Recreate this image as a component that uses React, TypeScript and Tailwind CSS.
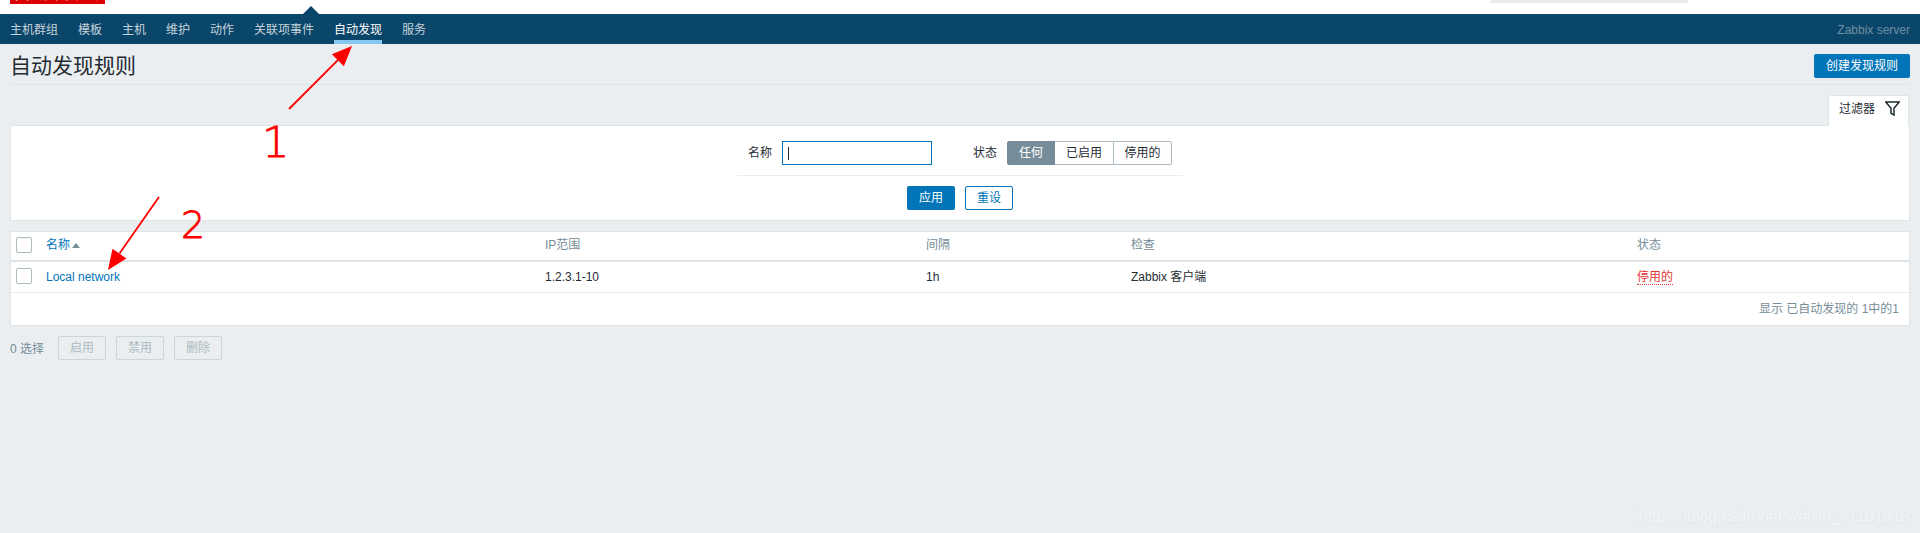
const font = "font-['Liberation_Sans','Noto_Sans_CJK_SC',sans-serif]";

function Checkbox() {
  return <span className="block h-4 w-4 rounded-[2px] border border-[#acbbc2] bg-white" />;
}

function Arrow({ x1, y1, x2, y2 }: { x1: number; y1: number; x2: number; y2: number }) {
  const a = Math.atan2(y2 - y1, x2 - x1);
  const len = 20;
  const w = 8.5;
  const bx = x2 - Math.cos(a) * len;
  const by = y2 - Math.sin(a) * len;
  const nx = -Math.sin(a) * w;
  const ny = Math.cos(a) * w;
  return (
    <g>
      <line x1={x1} y1={y1} x2={bx} y2={by} stroke="#ff0000" strokeWidth="1.8" />
      <polygon points={`${x2},${y2} ${bx + nx},${by + ny} ${bx - nx},${by - ny}`} fill="#ff0000" />
    </g>
  );
}

const nav = ["主机群组", "模板", "主机", "维护", "动作", "关联项事件", "自动发现", "服务"];

export default function App() {
  return (
    <div className={`${font} relative min-h-screen overflow-hidden bg-[#ebeef0] text-xs text-[#1f2c33]`}>
      <header className="relative flex h-[14px] justify-between bg-white pl-[10px] pr-[232px]">
        <div className="h-[4px] w-[95px] overflow-hidden bg-[#dc0000] pl-[3px]">
          <div className="-mt-[17px] whitespace-nowrap text-[18px] leading-[20px] tracking-[1px] text-[#f6b0b0]">自动发现规则</div>
        </div>
        <div className="h-[3px] w-[198px] bg-[#ebebeb]" />
        <div className="absolute left-[303px] top-[6px] h-0 w-0 border-x-[8px] border-b-[8px] border-x-transparent border-b-[#0a466a]" />
      </header>

      <nav className="flex h-[30px] items-stretch justify-between bg-[#0a466a] px-[10px]">
        <ul className="flex gap-5">
          {nav.map((n) => (
            <li
              key={n}
              className={
                n === "自动发现"
                  ? "border-b-4 border-[#86c8f0] pt-2 text-[#ffffff]"
                  : "pt-2 text-[#c7d3da]"
              }
            >
              {n}
            </li>
          ))}
        </ul>
        <span className="pt-2 text-[#6f8fa3]">Zabbix server</span>
      </nav>

      <main className="px-[10px]">
        <div className="flex h-[41px] items-start justify-between border-b border-[#dfe4e7] pt-[10px]">
          <h1 className="text-[21px] font-normal leading-6">自动发现规则</h1>
          <button className="h-6 w-[96px] rounded-[2px] bg-[#0275b8] text-white">创建发现规则</button>
        </div>

        <div className="mt-[10px] flex justify-end">
          <div className="relative z-10 -mb-px mr-px flex h-[31px] w-[81px] items-start gap-[10px] rounded-t-[2px] border-x border-t border-[#dfe4e7] bg-white pl-[10px] pt-[3px]">
            <span className="leading-[20px]">过滤器</span>
            <svg width="15" height="15" viewBox="0 0 15 15" className="mt-[2px]" fill="none" stroke="#1f2c33" strokeWidth="1.5">
              <path d="M0.8 1h13.4L9 7.2V14l-3-1.6V7.2z" />
            </svg>
          </div>
        </div>

        <section className="border border-[#dfe4e7] bg-white">
          <div className="mx-auto flex w-[446px] items-center border-b border-[#ebeef0] pb-[10px] pl-[11px] pt-[15px]">
            <label className="w-[24px]">名称</label>
            <div className="ml-[10px] flex h-6 w-[150px] items-center border border-[#0275b8] pl-[5px]">
              <span className="h-[13px] w-px bg-[#1f2c33]" />
            </div>
            <label className="ml-[41px]">状态</label>
            <div className="ml-[10px] flex h-6">
              <span className="flex w-[48px] items-center justify-center rounded-l-[2px] bg-[#768d99] text-white">任何</span>
              <span className="flex w-[58px] items-center justify-center border-y border-[#acbbc2] bg-white">已启用</span>
              <span className="flex w-[59px] items-center justify-center rounded-r-[2px] border border-[#acbbc2] bg-white">停用的</span>
            </div>
          </div>
          <div className="flex justify-center gap-[10px] py-[10px]">
            <button className="h-6 w-[48px] rounded-[2px] bg-[#0275b8] text-white">应用</button>
            <button className="h-6 w-[48px] rounded-[2px] border border-[#0275b8] bg-white text-[#0275b8]">重设</button>
          </div>
        </section>

        <section className="mt-[10px] border border-[#dfe4e7] bg-white">
          <div className="grid h-[30px] grid-cols-[35px_499px_381px_205px_506px_1fr] items-center border-b-2 border-[#dfe4e7] pb-[2px] text-[#768d99]">
            <div className="pl-[5px]"><Checkbox /></div>
            <div className="flex items-center gap-[2px] text-[#0275b8]">
              名称
              <span className="mt-[1px] h-0 w-0 border-x-[4px] border-b-[5px] border-x-transparent border-b-[#768d99]" />
            </div>
            <div>IP范围</div>
            <div>间隔</div>
            <div>检查</div>
            <div>状态</div>
          </div>
          <div className="grid h-[31px] grid-cols-[35px_499px_381px_205px_506px_1fr] items-center border-b border-[#ebeef0]">
            <div className="pb-[2px] pl-[5px]"><Checkbox /></div>
            <div className="text-[#0275b8]">Local network</div>
            <div>1.2.3.1-10</div>
            <div>1h</div>
            <div>Zabbix 客户端</div>
            <div>
              <span className="border-b border-dotted border-[#e33734] text-[#e33734]">停用的</span>
            </div>
          </div>
          <div className="flex h-[32px] items-center justify-end pr-[10px] text-[#768d99]">显示 已自动发现的 1中的1</div>
        </section>

        <div className="mt-[10px] flex items-center text-[#768d99]">
          <span className="mt-[1px] w-[48px]">0 选择</span>
          <div className="flex gap-[10px]">
            {["启用", "禁用", "删除"].map((t) => (
              <button key={t} className="h-6 w-[48px] rounded-[2px] border border-[#cdd5da] bg-[#ebeef0] text-[#acbbc2]">{t}</button>
            ))}
          </div>
        </div>
      </main>

      <svg className="pointer-events-none absolute left-0 top-0 z-20" width="400" height="300">
        <Arrow x1={289} y1={109} x2={352} y2={46} />
        <Arrow x1={159} y1={197} x2={108} y2={270} />
      </svg>
      <span className="absolute left-[262px] top-[118px] z-20 text-[43px] font-extralight leading-[48px] text-[#ff0000] font-['DejaVu_Sans',sans-serif] [-webkit-text-stroke:0.8px_#ff0000]">1</span>
      <span className="absolute left-[181px] top-[202px] z-20 text-[38px] font-extralight leading-[46px] text-[#ff0000] font-['DejaVu_Sans',sans-serif] [-webkit-text-stroke:0.8px_#ff0000]">2</span>
      <span className="absolute right-[10px] top-[505px] z-20 text-base text-[#f2f4f5] [text-shadow:1px_1px_2px_#e2e5e8]">https://blog.csdn.net/weixin_41191813</span>
    </div>
  );
}
